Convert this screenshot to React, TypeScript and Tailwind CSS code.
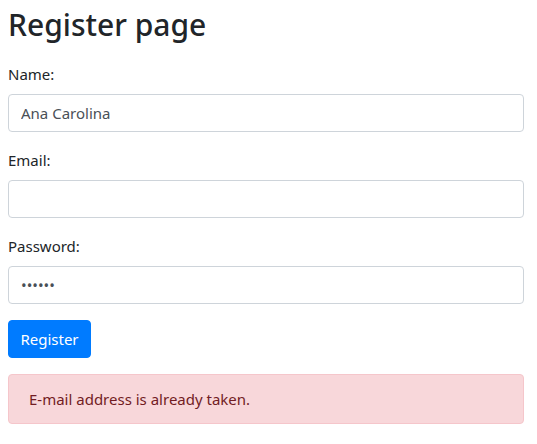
import React from "react";

export default function App() {
  const font = { fontFamily: '"Noto Sans", "Open Sans", sans-serif' };
  return (
    <div className="bg-white w-[537px] h-[444px] px-2 text-[#212529]" style={font}>
      <h1 className="text-[30px] leading-[38px] font-medium pt-[6px] mb-[18px]">Register page</h1>
      <form className="w-[516px]">
        <div className="mb-4">
          <label className="block text-[15px] leading-6 mb-2">Name:</label>
          <input
            className="block w-full h-[38px] px-3 text-[15px] text-[#495057] border border-[#ced4da] rounded outline-none"
            defaultValue="Ana Carolina"
          />
        </div>
        <div className="mb-4">
          <label className="block text-[15px] leading-6 mb-2">Email:</label>
          <input className="block w-full h-[38px] px-3 text-[15px] text-[#495057] border border-[#ced4da] rounded outline-none" />
        </div>
        <div className="mb-4">
          <label className="block text-[15px] leading-6 mb-2">Password:</label>
          <input
            type="password"
            className="block w-full h-[38px] px-3 text-[15px] text-[#495057] border border-[#ced4da] rounded outline-none"
            defaultValue="123456"
          />
        </div>
        <button
          type="button"
          className="h-[38px] w-[83px] text-[15px] text-white bg-[#007bff] rounded border border-[#007bff]"
        >
          Register
        </button>
        <div className="mt-4 h-[50px] flex items-center px-5 bg-[#f8d7da] border border-[#f5c6cb] rounded text-[#721c24] text-[15px]">
          E-mail address is already taken.
        </div>
      </form>
    </div>
  );
}
